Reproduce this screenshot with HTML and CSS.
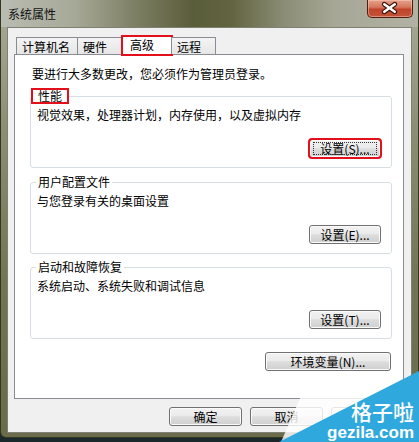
FILE: index.html
```html
<!DOCTYPE html>
<html lang="zh-CN">
<head>
<meta charset="utf-8">
<title>系统属性</title>
<link rel="stylesheet" href="styles.css">
</head>
<body>
<div class="window">
  <div class="titlebar">
    <span class="title">系统属性</span>
    <div class="close">
      <svg width="46" height="17" viewBox="0 0 46 17">
        <path d="M17 4 L28 12 M28 4 L17 12" stroke="#3b1209" stroke-width="5" stroke-linecap="round" fill="none"/>
        <path d="M17 4 L28 12 M28 4 L17 12" stroke="#ffffff" stroke-width="2.6" stroke-linecap="round" fill="none"/>
      </svg>
    </div>
  </div>
  <div class="client">
    <div class="tabs">
      <div class="tab t1">计算机名</div>
      <div class="tab t2">硬件</div>
      <div class="tab sel hl">高级</div>
      <div class="tab t4">远程</div>
    </div>
    <div class="panel">
      <p class="note">要进行大多数更改，您必须作为管理员登录。</p>
      <div class="group g1">
        <span class="legend hl-legend">性能</span>
        <p class="desc">视觉效果，处理器计划，内存使用，以及虚拟内存</p>
        <button class="btn gbtn focus hl">设置(S)...</button>
      </div>
      <div class="group g2">
        <span class="legend">用户配置文件</span>
        <p class="desc">与您登录有关的桌面设置</p>
        <button class="btn gbtn">设置(E)...</button>
      </div>
      <div class="group g3">
        <span class="legend">启动和故障恢复</span>
        <p class="desc">系统启动、系统失败和调试信息</p>
        <button class="btn gbtn">设置(T)...</button>
      </div>
      <div class="envrow">
        <button class="btn env">环境变量(N)...</button>
      </div>
    </div>
    <div class="footer">
      <button class="btn">确定</button>
      <button class="btn">取消</button>
      <button class="btn">应用(A)</button>
    </div>
  </div>
</div>
<svg class="watermark" width="419" height="442" viewBox="0 0 419 442">
  <polygon points="281,442 301,396 419,396 419,442" fill="#ffffff" fill-opacity="0.82"/>
  <polygon points="279,442 419,371 419,442" fill="#2fa8dd"/>
  <text x="414" y="420" text-anchor="end" class="wm1">格子啦</text>
  <text x="414" y="438" text-anchor="end" class="wm2">gezila.com</text>
</svg>
</body>
</html>
```
FILE: styles.css
```css
* { box-sizing: border-box; }
html, body { margin: 0; padding: 0; }
body {
  width: 419px;
  height: 442px;
  overflow: hidden;
  position: relative;
  background: #1b282b;
  font-family: "Noto Sans CJK SC", "Noto Sans", sans-serif;
  font-size: 12px;
  line-height: 14px;
  color: #000;
}
p { margin: 0; }

.window {
  width: 419px;
  height: 438px;
  border: 1px solid #34361f;
  border-top: 0;
  border-radius: 0 0 6px 6px;
  padding: 0 6px 4px;
  background: linear-gradient(180deg, #a9ab99 0%, #8c8e73 30%, #727453 65%, #6a6b4a 100%);
  display: flex;
  flex-direction: column;
}

.titlebar {
  height: 27px;
  margin: 0 -6px;
  padding-left: 7px;
  display: flex;
  align-items: flex-start;
  background: linear-gradient(90deg, #b9bcb1 0%, #a6a897 18%, #7b7d61 33%, #5a5d3a 46%, #61643f 55%, #8b8d76 68%, #a6a796 80%, #b1b2a4 100%);
}
.title {
  padding-top: 7px;
  line-height: 14px;
  color: #111;
}
.close {
  width: 46px;
  height: 18px;
  margin-left: auto;
  margin-right: 5px;
  border: 1px solid #4f1d12;
  border-top: 0;
  border-radius: 0 0 5px 5px;
  background: linear-gradient(180deg, #e4a28d 0%, #d6765e 42%, #c0442a 55%, #c4553a 100%);
  box-shadow: inset 0 0 0 1px rgba(255, 215, 195, 0.45);
  display: flex;
  align-items: center;
  justify-content: center;
}
.close svg { display: block; }

.client {
  height: 406px;
  border: 1px solid #7f8273;
  background: #f0f0f0;
  padding: 6px 7px 0 6px;
  display: flex;
  flex-direction: column;
}

.tabs {
  height: 20px;
  margin-left: 2px;
  display: flex;
  align-items: flex-end;
  position: relative;
  z-index: 1;
}
.tab {
  height: 17px;
  border: 1px solid #898c95;
  border-bottom: 0;
  background: linear-gradient(180deg, #f4f4f4 0%, #e6e6e6 100%);
  padding: 2px 0 0 5px;
  line-height: 14px;
  white-space: nowrap;
}
.t1 { width: 62px; }
.t2 { width: 46px; margin-left: -1px; }
.t4 { width: 45px; margin-left: -1px; }
.tab.sel {
  width: 50px;
  height: 19px;
  margin-bottom: -1px;
  margin-left: -1px;
  background: #fff;
  padding: 1px 0 0 7px;
}
.hl {
  outline: 2px solid #e3101c;
  outline-offset: -1px;
}

.panel {
  height: 345px;
  border: 1px solid #898c95;
  background: #fff;
  padding: 12px 11px 0 15px;
  display: flex;
  flex-direction: column;
}
.note { margin-left: 2px; }

.group {
  height: 72px;
  border: 1px solid #d5dfe5;
  border-radius: 3px;
  display: flex;
  flex-direction: column;
  align-items: flex-start;
}
.g1 { margin-top: 15px; }
.g2 { margin-top: 14px; }
.g3 { margin-top: 13px; }
.legend {
  margin-top: -8px;
  margin-left: 5px;
  padding: 0 2px;
  background: #fff;
  line-height: 14px;
}
.legend.hl-legend {
  margin-left: 1px;
  padding: 0 6px;
  outline: 2px solid #e3101c;
  outline-offset: -1px;
}
.desc {
  margin-top: 5px;
  margin-left: 6px;
}

.btn {
  font-family: inherit;
  font-size: 12px;
  line-height: 15px;
  color: #000;
  width: 73px;
  height: 19px;
  padding: 0;
  border: 1px solid #707070;
  border-radius: 3px;
  background: linear-gradient(180deg, #f2f2f2 0%, #ebebeb 45%, #dddddd 52%, #cfcfcf 100%);
  box-shadow: inset 0 0 0 1px #fbfbfb;
  white-space: nowrap;
}
.gbtn {
  width: 72px;
  align-self: flex-end;
  margin-top: auto;
  margin-right: 10px;
  margin-bottom: 9px;
}
.focus { position: relative; }
.focus::after {
  content: "";
  position: absolute;
  inset: 2px 3px;
  border: 1px dotted #333;
}

.envrow {
  margin-top: 13px;
  display: flex;
  justify-content: flex-end;
  padding-right: 1px;
}
.env { width: 126px; }

.footer {
  margin-top: 8px;
  display: flex;
  justify-content: flex-end;
  gap: 8px;
}

.watermark {
  position: absolute;
  left: 0;
  top: 0;
  pointer-events: none;
}
.wm1 {
  font-family: "Noto Sans CJK SC", sans-serif;
  font-size: 21px;
  font-weight: 500;
  fill: #ffffff;
}
.wm2 {
  font-family: "Liberation Sans", Arial, sans-serif;
  font-size: 17px;
  font-weight: bold;
  fill: #ffffff;
}
```
